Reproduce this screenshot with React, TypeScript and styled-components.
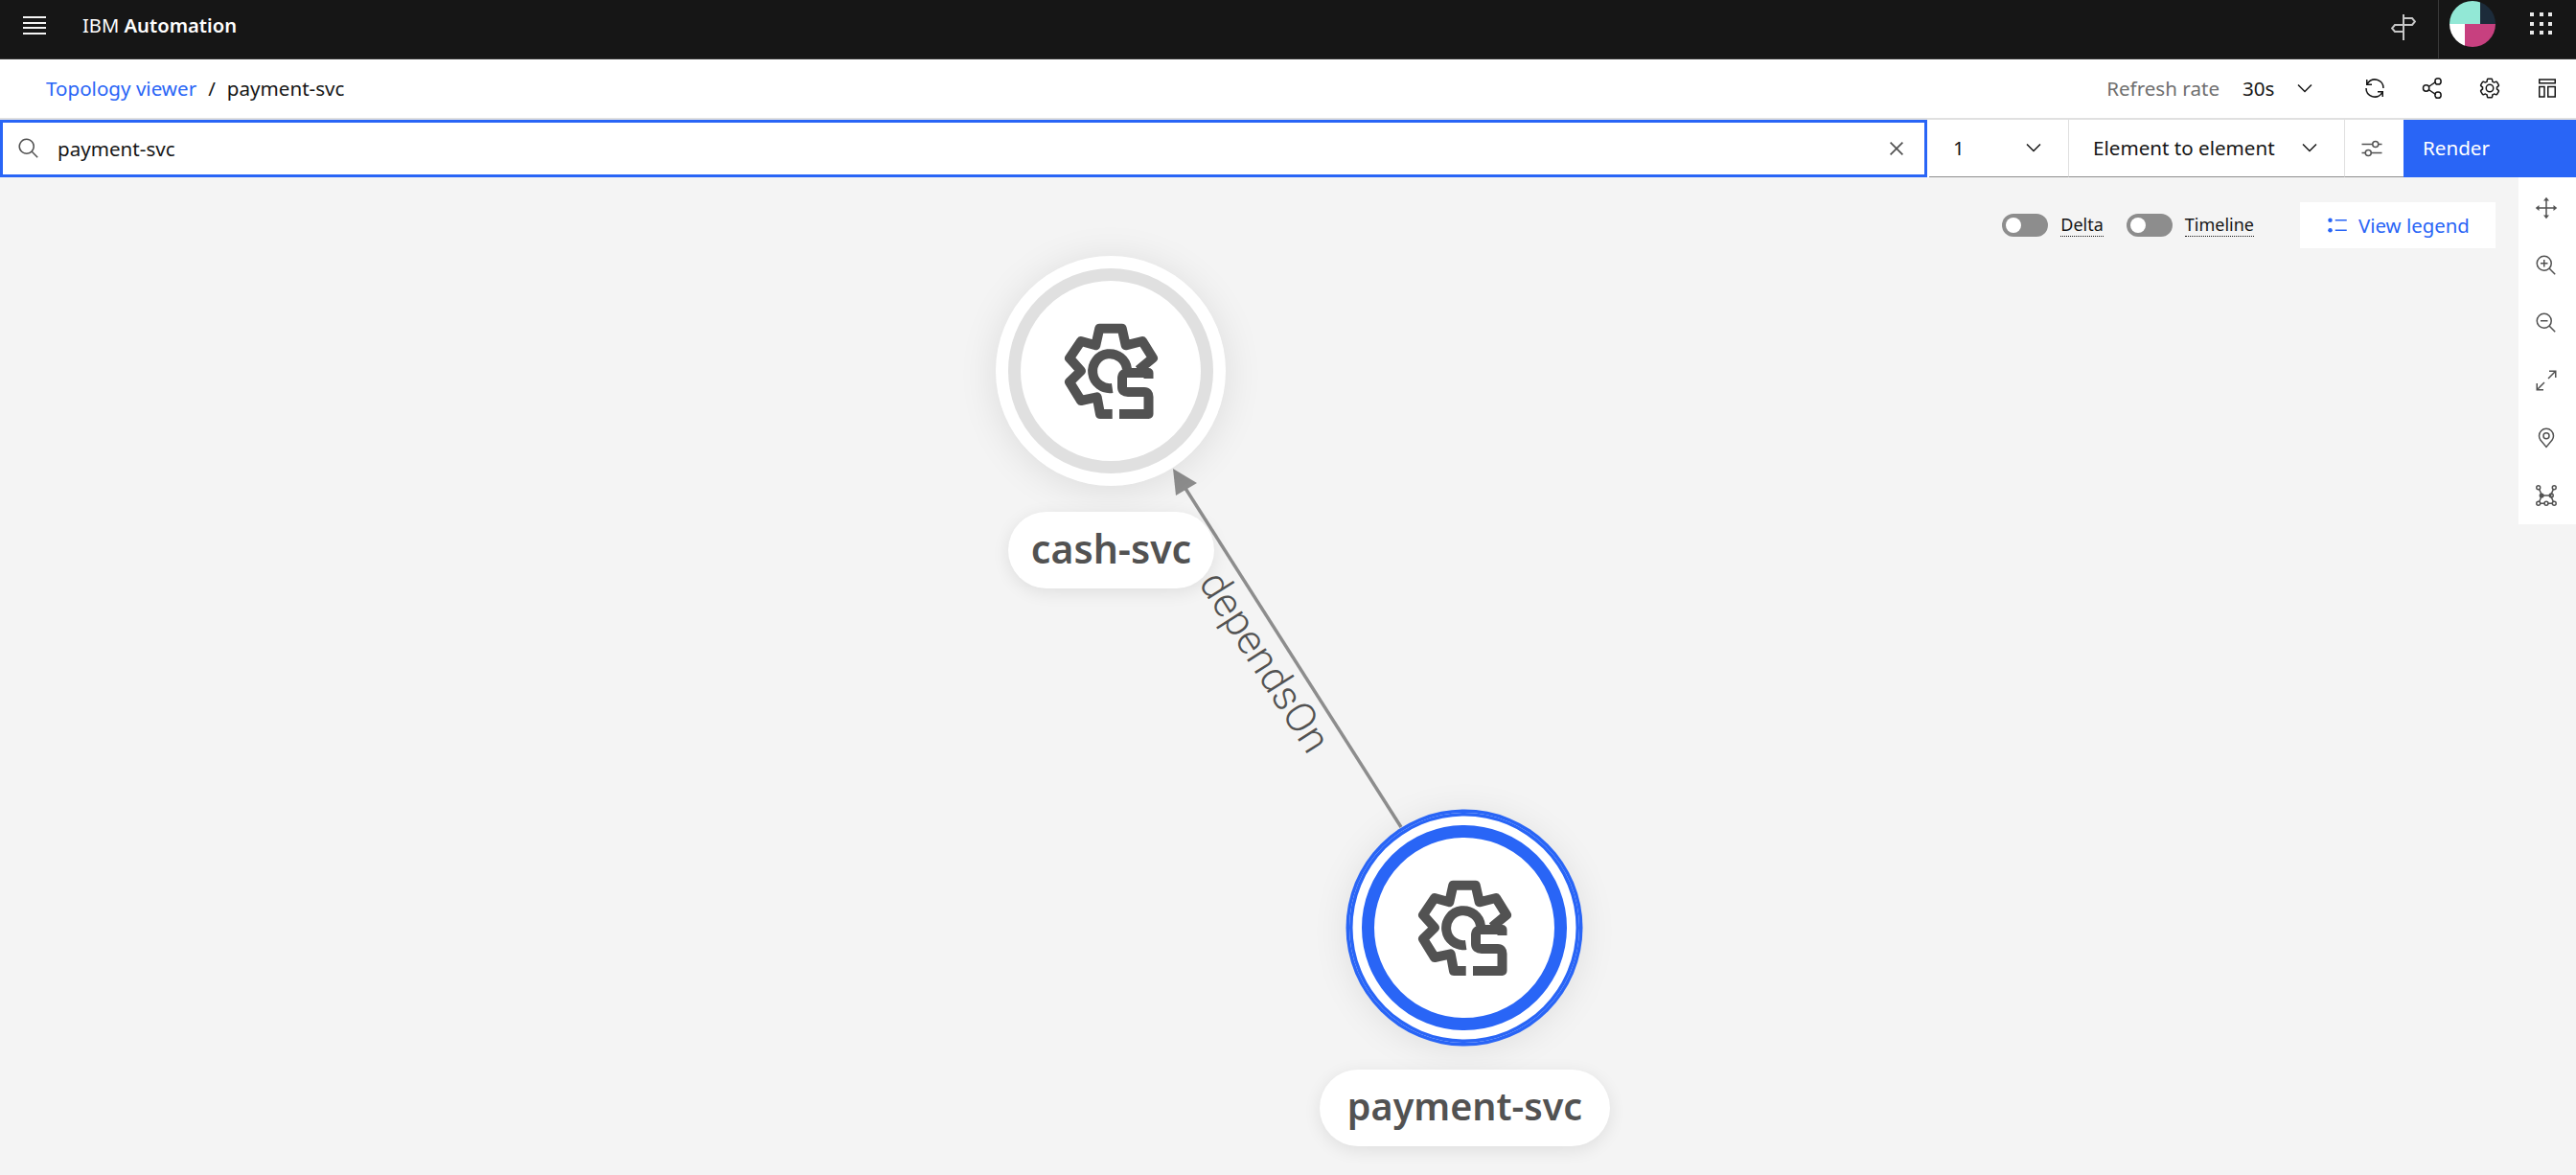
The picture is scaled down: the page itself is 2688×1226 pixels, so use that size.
import React from 'react'
import styled, { createGlobalStyle } from 'styled-components'

const BLUE = '#2965f6'
const FONT = `"Noto Sans", "Open Sans", sans-serif`

const Global = createGlobalStyle`
html, body { margin: 0; padding: 0; background: #f4f4f4; }
*, *::before, *::after { box-sizing: border-box; }
body { font-family: ${FONT}; }
`

const Page = styled.div`
width: 2688px;
height: 1226px;
display: flex;
flex-direction: column;
overflow: hidden;
`

const TopBar = styled.header`
height: 62px;
flex: none;
display: flex;
align-items: stretch;
background: #161616;
border-bottom: 1px solid #393939;
color: #fff;
`
const MenuButton = styled.div`
width: 86px;
display: flex;
flex-direction: column;
justify-content: center;
gap: 3.6px;
padding: 0 0 8px 24px;
span {
  display: block;
  width: 24px;
  height: 2px;
  background: #f4f4f4;
}
`
const Brand = styled.div`
font-size: 20.2px;
line-height: 52px;
flex: 1;
white-space: nowrap;
b { font-weight: 600; }
`
const TopAction = styled.div`
width: 72px;
display: flex;
justify-content: center;
padding-top: 14px;
color: #c6c6c6;
`
const AvatarCell = styled.div`
width: 96px;
border-left: 1px solid #393939;
padding: 1px 0 0 11px;
`
const AppGrid = styled.div`
width: 48px;
padding: 13px 0 0 0;
display: grid;
grid-template-columns: repeat(3, 5px);
grid-auto-rows: 5px;
gap: 4.5px 4.5px;
align-content: start;
i { display: block; width: 4px; height: 4px; background: #e8e8e8; }
`

const CrumbBar = styled.div`
height: 63px;
flex: none;
display: flex;
align-items: center;
background: #fff;
border-bottom: 2px solid #e0e0e0;
padding: 0 0 2px 48px;
font-size: 20.6px;
color: #161616;
`
const CrumbLink = styled.span`
color: ${BLUE};
`
const CrumbSlash = styled.span`
margin: 0 12px 0 12px;
`
const RefreshLabel = styled.span`
margin-left: auto;
color: #6f6f6f;
`
const RefreshValue = styled.span`
margin-left: 24px;
width: 53px;
`
const RefreshChevron = styled.div`
margin-right: 31px;
color: #161616;
`
const BarIcon = styled.div`
width: 60px;
display: flex;
justify-content: center;
color: #161616;
`

const ControlRow = styled.div`
height: 60px;
flex: none;
display: flex;
background: #fff;
font-size: 20.6px;
color: #161616;
`
const SearchBox = styled.div`
width: 2011px;
margin-right: 2px;
flex: none;
display: flex;
align-items: center;
border: 3px solid ${BLUE};
padding: 0 15px 1px 15px;
color: #525252;
`
const SearchText = styled.span`
margin-left: 18px;
flex: 1;
color: #161616;
`
const Picker = styled.div<{ $w: number }>`
width: ${p => p.$w}px;
flex: none;
display: flex;
align-items: center;
justify-content: space-between;
padding: 0 24px 1px 25px;
border-bottom: 1px solid #8d8d8d;
border-right: 1px solid #e0e0e0;
`
const FilterButton = styled.div`
width: 61px;
flex: none;
display: flex;
align-items: center;
justify-content: center;
padding-right: 5px;
border-bottom: 1px solid #8d8d8d;
color: #525252;
`
const RenderButton = styled.div`
flex: 1;
display: flex;
align-items: center;
padding: 0 0 2px 20px;
background: ${BLUE};
color: #fff;
`

const Canvas = styled.main`
position: relative;
flex: 1;
background: #f4f4f4;
`
const Graph = styled.svg`
position: absolute;
left: 0;
top: 0;
width: 2688px;
height: 1041px;
`
const EdgeLabel = styled.text`
font-family: Roboto, sans-serif;
font-weight: 300;
font-size: 43px;
fill: #525252;
`
const Node = styled.div<{ $x: number; $y: number; $selected?: boolean }>`
position: absolute;
left: ${p => p.$x}px;
top: ${p => p.$y}px;
width: 240px;
height: 240px;
border-radius: 50%;
background: #fff;
display: flex;
align-items: center;
justify-content: center;
color: #525252;
box-shadow: ${p => (p.$selected ? `0 0 0 3.5px ${BLUE}, inset 0 0 0 3.5px ${BLUE}, ` : '')}0 4px 40px rgba(0, 0, 0, 0.1);
&::before {
  content: '';
  position: absolute;
  left: 13px;
  top: 13px;
  width: 214px;
  height: 214px;
  border-radius: 50%;
  border: 13.5px solid ${p => (p.$selected ? BLUE : '#e0e0e0')};
}
`
const NodeName = styled.div<{ $x: number; $y: number; $w: number; $size: number }>`
position: absolute;
left: ${p => p.$x}px;
top: ${p => p.$y}px;
width: ${p => p.$w}px;
height: 80px;
border-radius: 40px;
background: #fff;
box-shadow: 0 4px 18px rgba(0, 0, 0, 0.09);
font-size: ${p => p.$size}px;
font-weight: 600;
line-height: 76px;
text-align: center;
color: #525252;
white-space: nowrap;
`

const ViewTools = styled.div`
position: absolute;
right: 0;
top: 0;
display: flex;
align-items: flex-start;
`
const Switches = styled.div`
display: flex;
align-items: center;
height: 24px;
margin-top: 38px;
`
const Toggle = styled.div`
position: relative;
width: 48px;
height: 24px;
border-radius: 12px;
background: #8d8d8d;
margin-right: 13px;
&::after {
  content: '';
  position: absolute;
  left: 4px;
  top: 4px;
  width: 16px;
  height: 16px;
  border-radius: 50%;
  background: #fff;
}
`
const ToggleLabel = styled.span<{ $gap: number }>`
font-size: 18px;
line-height: 23px;
margin-right: ${p => p.$gap}px;
color: #161616;
border-bottom: 1px dotted #161616;
`
const LegendButton = styled.div`
width: 204px;
height: 48px;
margin: 26px 24px 0 0;
display: flex;
align-items: center;
gap: 10px;
padding-left: 27px;
background: #fff;
color: ${BLUE};
font-size: 20.4px;
white-space: nowrap;
`
const SideRail = styled.div`
width: 60px;
display: flex;
flex-direction: column;
background: #fff;
padding-top: 2px;
`
const RailButton = styled.div`
height: 60px;
display: flex;
align-items: center;
justify-content: center;
padding-right: 2px;
color: #525252;
`
const IconSvg = styled.svg`
flex: none;
display: block;
`

const Icon = ({ size = 24, children }: { size?: number; children: React.ReactNode }) => (
  <IconSvg width={size} height={size} viewBox="0 0 32 32" fill="currentColor">
    {children}
  </IconSvg>
)

const Chevron = () => (
  <Icon>
    <path d="M16 22L6 12 7.4 10.6 16 19.2 24.6 10.6 26 12z" />
  </Icon>
)

const ZoomGlass = () => (
  <path d="M21.4479,20A10.856,10.856,0,0,0,24,13,11,11,0,1,0,13,24a10.856,10.856,0,0,0,7-2.5521L27.5859,29,29,27.5859ZM13,22a9,9,0,1,1,9-9A9.01,9.01,0,0,1,13,22Z" />
)

const ServiceGear = () => (
  <svg width="112" height="112" viewBox="-56 -56 112 112" fill="none" stroke="currentColor" strokeWidth="10" strokeLinejoin="round">
    <path d="M1.7 45 H-11 L-14.3 27.3 L-31 31 L-43 11.7 L-31 0 L-43 -13.3 L-31 -31 L-15.7 -26.7 L-11.7 -44.3 H11.7 L15.7 -26.7 L33 -31 L44 -13.3 L29 -1" />
    <path d="M1.7 18 A18 18 0 1 1 17 -2" />
    <path d="M39.5 8 V2 H18 Q12 2 12 8 V17 Q12 22 18 22 H35 Q39.5 22 39.5 27 V45 H9" />
  </svg>
)

export default function App() {
  return (
    <Page>
      <Global />
      <TopBar>
        <MenuButton><span /><span /><span /><span /></MenuButton>
        <Brand>IBM <b>Automation</b></Brand>
        <TopAction>
          <svg width="26" height="28" viewBox="0 0 26 28" fill="none" stroke="currentColor" strokeWidth="2">
            <path d="M13 1v27" />
            <path d="M13 5h9l3 3.5-3 3.5h-9" />
            <path d="M13 12H4l-3 3.5L4 19h9" />
          </svg>
        </TopAction>
        <AvatarCell>
          <svg width="48" height="48" viewBox="0 0 48 48">
            <clipPath id="avatar"><circle cx="24" cy="24" r="24" /></clipPath>
            <g clipPath="url(#avatar)">
              <rect width="32" height="24" fill="#92e8d6" />
              <rect x="32" width="16" height="24" fill="#1c2b3a" />
              <rect y="24" width="16" height="24" fill="#ffffff" />
              <rect x="16" y="24" width="32" height="24" fill="#c7407f" />
            </g>
          </svg>
        </AvatarCell>
        <AppGrid>{Array.from({ length: 9 }, (_, i) => <i key={i} />)}</AppGrid>
      </TopBar>

      <CrumbBar>
        <CrumbLink>Topology viewer</CrumbLink>
        <CrumbSlash>/</CrumbSlash>
        <span>payment-svc</span>
        <RefreshLabel>Refresh rate</RefreshLabel>
        <RefreshValue>30s</RefreshValue>
        <RefreshChevron><Chevron /></RefreshChevron>
        <BarIcon>
          <Icon><path d="M12 10H6.78A11 11 0 0 1 27 16h2A13 13 0 0 0 6 7.68V4H4v8h8zM20 22h5.22A11 11 0 0 1 5 16H3a13 13 0 0 0 23 8.32V28h2V20H20z" /></Icon>
        </BarIcon>
        <BarIcon>
          <Icon>
            <path fill="none" stroke="currentColor" strokeWidth="2" d="M11 14l10-7M11 18l10 7" />
            <circle cx="7.5" cy="16" r="4.2" fill="none" stroke="currentColor" strokeWidth="2" />
            <circle cx="24" cy="6.5" r="4.2" fill="none" stroke="currentColor" strokeWidth="2" />
            <circle cx="24" cy="25.5" r="4.2" fill="none" stroke="currentColor" strokeWidth="2" />
          </Icon>
        </BarIcon>
        <BarIcon>
          <Icon>
            <path d="M27,16.76c0-.25,0-.5,0-.76s0-.51,0-.77l1.92-1.68A2,2,0,0,0,29.3,11L26.94,7a2,2,0,0,0-1.73-1,2,2,0,0,0-.64.1l-2.43.82a11.35,11.35,0,0,0-1.31-.75l-.51-2.52a2,2,0,0,0-2-1.61H13.64a2,2,0,0,0-2,1.61l-.51,2.52a11.48,11.48,0,0,0-1.32.75L7.43,6.06A2,2,0,0,0,6.79,6,2,2,0,0,0,5.06,7L2.7,11a2,2,0,0,0,.41,2.51L5,15.24c0,.25,0,.5,0,.76s0,.51,0,.77L3.11,18.45A2,2,0,0,0,2.7,21L5.06,25a2,2,0,0,0,1.73,1,2,2,0,0,0,.64-.1l2.43-.82a11.35,11.35,0,0,0,1.31.75l.51,2.52a2,2,0,0,0,2,1.61h4.72a2,2,0,0,0,2-1.61l.51-2.52a11.48,11.48,0,0,0,1.32-.75l2.42.82a2,2,0,0,0,.64.1,2,2,0,0,0,1.73-1L29.3,21a2,2,0,0,0-.41-2.51ZM25.21,24l-3.43-1.16a8.86,8.86,0,0,1-2.71,1.57L18.36,28H13.64l-.71-3.55a9.36,9.36,0,0,1-2.7-1.57L6.79,24,4.43,20l2.72-2.4a8.9,8.9,0,0,1,0-3.13L4.43,12,6.79,8l3.43,1.16a8.86,8.86,0,0,1,2.71-1.57L13.64,4h4.72l.71,3.55a9.36,9.36,0,0,1,2.7,1.57L25.21,8,27.57,12l-2.72,2.4a8.9,8.9,0,0,1,0,3.13L27.57,20Z" />
            <path d="M16,22a6,6,0,1,1,6-6A5.94,5.94,0,0,1,16,22Zm0-10a3.91,3.91,0,0,0-4,4,3.91,3.91,0,0,0,4,4,3.91,3.91,0,0,0,4-4A3.91,3.91,0,0,0,16,12Z" />
          </Icon>
        </BarIcon>
        <BarIcon>
          <Icon>
            <path d="M4 3h24v7H4zM6 5v3h20V5zM4 13h9v16H4zM6 15v12h5V15zM16 13h12v16H16zM18 15v12h8V15z" fillRule="evenodd" />
          </Icon>
        </BarIcon>
      </CrumbBar>

      <ControlRow>
        <SearchBox>
          <Icon><path d="M29,27.5859l-7.5521-7.5521a11.0177,11.0177,0,1,0-1.4141,1.4141L27.5859,29ZM4,13a9,9,0,1,1,9,9A9.01,9.01,0,0,1,4,13Z" /></Icon>
          <SearchText>payment-svc</SearchText>
          <Icon size={28}><path d="M24 9.4L22.6 8 16 14.6 9.4 8 8 9.4 14.6 16 8 22.6 9.4 24 16 17.4 22.6 24 24 22.6 17.4 16 24 9.4z" /></Icon>
        </SearchBox>
        <Picker $w={146}><span>1</span><Chevron /></Picker>
        <Picker $w={288}><span>Element to element</span><Chevron /></Picker>
        <FilterButton>
          <Icon>
            <g fill="none" stroke="currentColor" strokeWidth="2">
              <path d="M2 10h15M25 10h5M2 22h5M15 22h15" />
              <circle cx="21" cy="10" r="4" />
              <circle cx="11" cy="22" r="4" />
            </g>
          </Icon>
        </FilterButton>
        <RenderButton>Render</RenderButton>
      </ControlRow>

      <Canvas>
        <Graph viewBox="0 185 2688 1041">
          <line x1="1462" y1="863" x2="1236" y2="508" stroke="#8d8d8d" strokeWidth="3.5" />
          <polygon points="1224,489 1249,504 1227,517" fill="#8d8d8d" />
          <EdgeLabel transform="translate(1250 608) rotate(57.5)">dependsOn</EdgeLabel>
        </Graph>

        <Node $x={1039} $y={82}><ServiceGear /></Node>
        <NodeName $x={1052} $y={349} $w={215} $size={41}>cash-svc</NodeName>
        <Node $selected $x={1408} $y={663}><ServiceGear /></Node>
        <NodeName $x={1377} $y={931} $w={303} $size={39.5}>payment-svc</NodeName>

        <ViewTools>
          <Switches>
            <Toggle />
            <ToggleLabel $gap={24}>Delta</ToggleLabel>
            <Toggle />
            <ToggleLabel $gap={48}>Timeline</ToggleLabel>
          </Switches>
          <LegendButton>
            <Icon>
              <circle cx="6" cy="9" r="3" />
              <circle cx="6" cy="23" r="3" />
              <path d="M13 8h16v2H13zM13 22h16v2H13z" />
            </Icon>
            View legend
          </LegendButton>
          <SideRail>
            <RailButton>
              <Icon>
                <path d="M3 16h26M16 3v26" fill="none" stroke="currentColor" strokeWidth="2" />
                <path d="M16 1l4 5h-8zM16 31l4-5h-8zM1 16l5-4v8zM31 16l-5-4v8z" />
              </Icon>
            </RailButton>
            <RailButton>
              <Icon>
                <path d="M18 12L14 12 14 8 12 8 12 12 8 12 8 14 12 14 12 18 14 18 14 14 18 14 18 12z" />
                <ZoomGlass />
              </Icon>
            </RailButton>
            <RailButton>
              <Icon>
                <path d="M8 12h10v2H8z" />
                <ZoomGlass />
              </Icon>
            </RailButton>
            <RailButton>
              <Icon>
                <path d="M20 2v2h6.586L18 12.582 19.414 14 28 5.414V12h2V2H20zM14 19.416L12.592 18 4 26.586V20H2v10h10v-2H5.414L14 19.416z" />
              </Icon>
            </RailButton>
            <RailButton>
              <Icon>
                <path d="M16,18a5,5,0,1,1,5-5A5.0057,5.0057,0,0,1,16,18Zm0-8a3,3,0,1,0,3,3A3.0033,3.0033,0,0,0,16,10Z" />
                <path d="M16,30,7.5645,20.0513c-.0479-.0571-.3482-.4515-.3482-.4515A10.8888,10.8888,0,0,1,5,13a11,11,0,0,1,22,0,10.8844,10.8844,0,0,1-2.2148,6.5973l-.0015.0025s-.3.3944-.3447.4474ZM8.8125,18.395c.001.0007.2334.3082.2866.3744L16,26.9079l6.91-8.15c.0439-.0552.2783-.3649.2788-.3657A8.901,8.901,0,0,0,25,13,9,9,0,1,0,7,13a8.9054,8.9054,0,0,0,1.8125,5.395Z" />
              </Icon>
            </RailButton>
            <RailButton>
              <Icon>
                <g fill="none" stroke="currentColor" strokeWidth="2">
                  <path d="M6 7l4 9-4 9M26 7l-4 9 4 9M10 16h10M8 27h6M18 27h6" />
                  <circle cx="5" cy="5" r="2.6" />
                  <circle cx="27" cy="5" r="2.6" />
                  <circle cx="5" cy="27" r="2.6" />
                  <circle cx="16" cy="27" r="2.6" />
                  <circle cx="27" cy="27" r="2.6" />
                  <circle cx="23" cy="16" r="2.6" />
                </g>
                <circle cx="9.5" cy="16" r="3.4" />
              </Icon>
            </RailButton>
          </SideRail>
        </ViewTools>
      </Canvas>
    </Page>
  )
}
